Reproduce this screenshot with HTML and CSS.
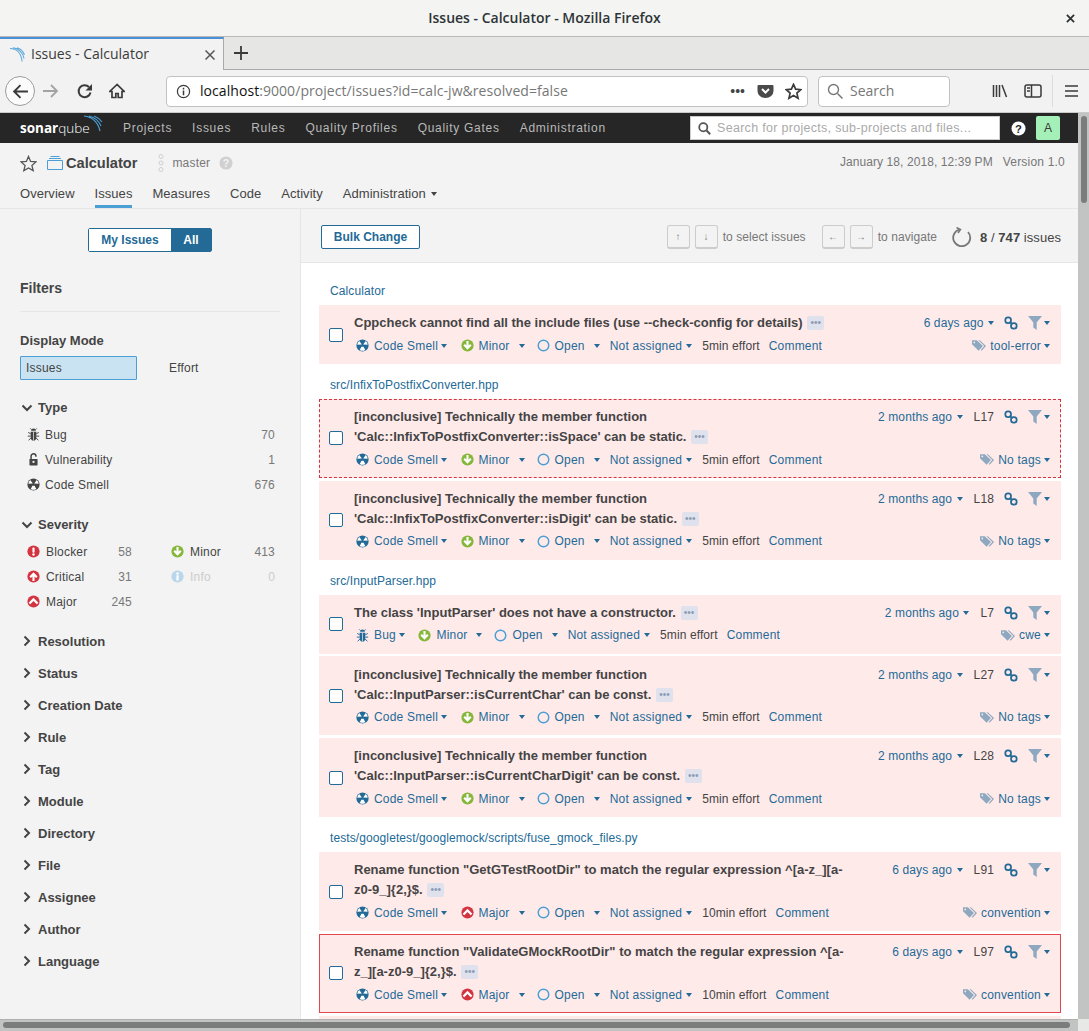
FILE: index.html
```html
<!DOCTYPE html>
<html lang="en">
<head>
    <meta charset="UTF-8">
    <title>Issues - Calculator - Mozilla Firefox</title>
    <link rel="stylesheet" href="styles.css">
</head>
<body>
<svg class="sprite" width="0" height="0">
    <defs>
        <symbol id="i-smell" viewBox="0 0 16 16"><circle cx="8" cy="8" r="7.5" fill="currentColor"/><path d="M7.2 6.700 4 2.400A6.500 6.500 0 0 0 1.600 7.100zM8.800 6.700 12 2.400a6.500 6.500 0 0 1 2.400 4.700zM6.700 9.500h2.600l2.100 4a6.500 6.500 0 0 1-6.800 0z" fill="#fff"/></symbol>
        <symbol id="i-bug" viewBox="0 0 16 16"><path d="M5 3.500a3 3 0 0 1 6 0zM4.500 4.500h7v6.500a3.500 4.500 0 0 1-7 0z" fill="currentColor"/><path d="M4.500 7 1.500 5.500M11.500 7l3-1.500M4.500 10H1M11.500 10H15M4.800 12.500 2 15M11.200 12.500 14 15M5.500 2 4 .5M10.500 2 12 .5" stroke="currentColor" fill="none" stroke-width="1.200"/><path d="M8 5v10" stroke="#fff" stroke-width=".8"/></symbol>
        <symbol id="i-lock" viewBox="0 0 16 16"><path d="M3 7.500h10v7a1 1 0 0 1-1 1H4a1 1 0 0 1-1-1z" fill="currentColor"/><path d="M5 7.500V4a3 3 0 0 1 6 0v.5" fill="none" stroke="currentColor" stroke-width="1.800"/><circle cx="8" cy="11" r="1.400" fill="#f3f3f3"/></symbol>
        <symbol id="i-blocker" viewBox="0 0 16 16"><circle cx="8" cy="8" r="7.500" fill="#d4333f"/><rect x="6.700" y="3" width="2.600" height="6.500" rx="1" fill="#fff"/><circle cx="8" cy="11.800" r="1.500" fill="#fff"/></symbol>
        <symbol id="i-critical" viewBox="0 0 16 16"><circle cx="8" cy="8" r="7.500" fill="#d4333f"/><path d="M8 2.800 13 8l-1.800 1.800L9.300 8v5.500H6.700V8L4.800 9.800 3 8z" fill="#fff"/></symbol>
        <symbol id="i-major" viewBox="0 0 16 16"><circle cx="8" cy="8" r="7.500" fill="#d4333f"/><path d="M8 3.500 14 9.500l-2 2-4-4-4 4-2-2z" fill="#fff"/></symbol>
        <symbol id="i-minor" viewBox="0 0 16 16"><circle cx="8" cy="8" r="7.500" fill="#85b73a"/><path d="M8 13.200 3 8l1.800-1.800L6.700 8V2.500h2.600V8l1.900-1.800L13 8z" fill="#fff"/></symbol>
        <symbol id="i-info" viewBox="0 0 16 16"><circle cx="8" cy="8" r="7.500" fill="#b9d6ea"/><rect x="6.700" y="6.500" width="2.600" height="6.500" fill="#fff"/><circle cx="8" cy="4.200" r="1.500" fill="#fff"/></symbol>
        <symbol id="i-open" viewBox="0 0 16 16"><circle cx="8" cy="8" r="6.500" fill="none" stroke="#4b9fd5" stroke-width="1.800"/></symbol>
        <symbol id="i-link" viewBox="0 0 16 16"><g fill="none" stroke="currentColor" stroke-width="2"><rect x="1.500" y="1.500" width="6.500" height="6.500" rx="3"/><rect x="8" y="8" width="6.500" height="6.500" rx="3"/><path d="m6.500 6.500 3 3"/></g></symbol>
        <symbol id="i-filter" viewBox="0 0 14 16"><path d="M0 1h14L8.700 7.500V15l-3.400-2.500v-5z" fill="#8ea9bf"/></symbol>
        <symbol id="i-tag" viewBox="0 0 16 14"><path d="M0 1h5.500l7 6.500-5 5.500L0 5.500z" fill="#8ea9bf"/><path d="M7.500 1H9l7 6.500-5 5.500-1-1 4-4.500z" fill="#8ea9bf"/><circle cx="2.600" cy="3.500" r="1" fill="#ffeaea"/></symbol>
        <symbol id="i-down" viewBox="0 0 12 12"><path d="m1.500 3.500 4.500 4.500 4.500-4.500" fill="none" stroke="currentColor" stroke-width="2"/></symbol>
        <symbol id="i-right" viewBox="0 0 12 12"><path d="m3.500 1.500 4.500 4.500-4.500 4.500" fill="none" stroke="currentColor" stroke-width="2"/></symbol>
        <symbol id="i-help" viewBox="0 0 16 16"><circle cx="8" cy="8" r="7.500" fill="currentColor"/><text x="8" y="12.300" text-anchor="middle" class="help-mark">?</text></symbol>
    </defs>
</svg>

<div class="window">
    <div class="titlebar">
        <span class="titlebar-text">Issues - Calculator - Mozilla Firefox</span>
        <svg class="titlebar-close" viewBox="0 0 10 10"><path d="m1 1 8 8M9 1l-8 8" stroke="#2e3436" stroke-width="2"/></svg>
    </div>
    <div class="tabstrip">
        <div class="tab">
            <svg class="tab-logo" viewBox="0 0 16 16"><path d="M1 1.500c7 0 11.500 5 12 13M4 .8c5.500.5 10 5 11 10.500M8 .8c3.500 1 6 3.500 7.500 7" fill="none" stroke="#5ba8d8" stroke-width="1.100"/></svg>
            <span class="tab-title">Issues - Calculator</span>
            <svg class="tab-close" viewBox="0 0 10 10"><path d="m.5.500 9 9M9.500.5l-9 9" stroke="#555" stroke-width="1.500"/></svg>
        </div>
        <svg class="tab-new" viewBox="0 0 14 14"><path d="M7 0v14M0 7h14" stroke="#3a3a3a" stroke-width="1.800"/></svg>
    </div>
    <div class="toolbar">
        <div class="back-btn"><svg viewBox="0 0 16 16"><path d="M15 8H2M8 2 2 8l6 6" fill="none" stroke="#3b3b3b" stroke-width="1.800"/></svg></div>
        <svg class="tool-icon forward" viewBox="0 0 16 16"><path d="M0 8h14M8 2l6 6-6 6" fill="none" stroke="#a3a3a3" stroke-width="1.800"/></svg>
        <svg class="tool-icon reload" viewBox="0 0 16 16"><path d="M13.500 9.500A6 6 0 1 1 12 4" fill="none" stroke="#3b3b3b" stroke-width="2"/><path d="M15 1v6.500H8.500z" fill="#3b3b3b"/></svg>
        <svg class="tool-icon home" viewBox="0 0 16 16"><path d="M8 1.500.8 8.500H3v6h3.800v-4h2.400v4H13v-6h2.200z" fill="none" stroke="#3b3b3b" stroke-width="1.700"/></svg>
        <div class="urlbar">
            <svg class="url-info" viewBox="0 0 16 16"><circle cx="8" cy="8" r="6.500" fill="none" stroke="#3b3b3b" stroke-width="1.300"/><path d="M8 7v5M8 4v1.800" stroke="#3b3b3b" stroke-width="1.600"/></svg>
            <span class="url-text"><b>localhost</b>:9000/project/issues?id=calc-jw&amp;resolved=false</span>
            <span class="url-dots">•••</span>
            <svg class="url-pocket" viewBox="0 0 16 16"><path d="M1 2h14a1 1 0 0 1 1 1v5a8 7 0 0 1-16 0V3a1 1 0 0 1 1-1z" fill="#4a4a4a"/><path d="m4.500 6 3.500 3.500L11.500 6" fill="none" stroke="#fff" stroke-width="2"/></svg>
            <svg class="url-star" viewBox="0 0 16 16"><path d="m8 1.300 2 4.500 4.900.5-3.700 3.200 1.100 4.800L8 11.800l-4.300 2.500 1.100-4.800L1.100 6.300 6 5.800z" fill="none" stroke="#3b3b3b" stroke-width="1.600"/></svg>
        </div>
        <div class="searchbar">
            <svg viewBox="0 0 16 16"><circle cx="6.500" cy="6.500" r="5" fill="none" stroke="#777" stroke-width="1.400"/><path d="m10.500 10.500 5 5" stroke="#777" stroke-width="1.500"/></svg>
            <span>Search</span>
        </div>
        <svg class="tool-icon library" viewBox="0 0 16 16"><path d="M1.500 2v12M4.500 2v12M7.500 2v12M10 2l4.500 12" stroke="#3b3b3b" stroke-width="1.500"/></svg>
        <svg class="tool-icon sidebar-btn" viewBox="0 0 18 16"><rect x="1" y="2" width="16" height="12" rx="2" fill="none" stroke="#3b3b3b" stroke-width="1.500"/><path d="M7.500 2v12M3 5h3M3 8h3" stroke="#3b3b3b" stroke-width="1.500"/></svg>
        <span class="tool-sep"></span>
        <svg class="tool-icon burger" viewBox="0 0 14 14"><path d="M0 2h13M0 7h13M0 12h13" stroke="#3b3b3b" stroke-width="1.500"/></svg>
    </div>

    <div class="viewport">
        <div class="page">
            <nav class="global-nav">
                <a class="logo"><b>sonar</b>qube<svg viewBox="0 0 20 18"><path d="M1 1c8 1 14 6 16 15M6 1c6 1.500 10 5 12 10M11 1c3 1 6 3.500 8 6" fill="none" stroke="#4b9fd5" stroke-width="1.200"/></svg></a>
                <a class="global-link">Projects</a>
                <a class="global-link">Issues</a>
                <a class="global-link">Rules</a>
                <a class="global-link">Quality Profiles</a>
                <a class="global-link">Quality Gates</a>
                <a class="global-link">Administration</a>
                <div class="global-search">
                    <svg viewBox="0 0 16 16"><circle cx="6.500" cy="6.500" r="5" fill="none" stroke="#555" stroke-width="2.200"/><path d="m10.500 10.500 4.500 4.500" stroke="#555" stroke-width="2.400"/></svg>
                    <span>Search for projects, sub-projects and files...</span>
                </div>
                <svg class="global-help"><use href="#i-help"/></svg>
                <span class="avatar">A</span>
            </nav>

            <header class="project-head">
                <div class="project-top">
                    <svg class="project-star" viewBox="0 0 16 16"><path d="m8 1.300 2 4.700 5 .5-3.800 3.300 1.200 4.900L8 12.200l-4.400 2.500 1.200-4.900L1 6.500 6 6z" fill="none" stroke="#555" stroke-width="1.200"/></svg>
                    <svg class="project-icon" viewBox="0 0 16 14"><path d="M.5 4.500h15v9H.5zM2 2.500h12M3.500.5h9" fill="none" stroke="#4b9fd5" stroke-width="1"/></svg>
                    <span class="project-name">Calculator</span>
                    <svg class="branch-icon" viewBox="0 0 6 18"><g fill="none" stroke="#cfcfcf" stroke-width="1"><circle cx="3" cy="2.500" r="2"/><circle cx="3" cy="15.500" r="2"/><circle cx="3" cy="9" r="2"/></g></svg>
                    <span class="branch-name">master</span>
                    <svg class="branch-help"><use href="#i-help"/></svg>
                    <span class="project-date">January 18, 2018, 12:39 PM</span>
                    <span class="project-version">Version 1.0</span>
                </div>
                <div class="project-nav">
                    <a>Overview</a>
                    <a class="active">Issues</a>
                    <a>Measures</a>
                    <a>Code</a>
                    <a>Activity</a>
                    <a>Administration <i class="caret dark"></i></a>
                </div>
            </header>

            <div class="layout">
                <aside class="sidebar">
                    <div class="toggle">
                        <span class="toggle-off">My Issues</span>
                        <span class="toggle-on">All</span>
                    </div>
                    <h2 class="filters-title">Filters</h2>
                    <h3 class="facet-title plain">Display Mode</h3>
                    <div class="mode-row">
                        <span class="mode-on">Issues</span>
                        <span class="mode-off">Effort</span>
                    </div>

                    <h3 class="facet-title"><svg class="chev"><use href="#i-down"/></svg>Type</h3>
                    <div class="facet-list">
                        <div class="facet-row"><svg class="facet-icon"><use href="#i-bug"/></svg><span>Bug</span><em>70</em></div>
                        <div class="facet-row"><svg class="facet-icon"><use href="#i-lock"/></svg><span>Vulnerability</span><em>1</em></div>
                        <div class="facet-row"><svg class="facet-icon"><use href="#i-smell"/></svg><span>Code Smell</span><em>676</em></div>
                    </div>

                    <h3 class="facet-title"><svg class="chev"><use href="#i-down"/></svg>Severity</h3>
                    <div class="facet-grid">
                        <div class="facet-row"><svg class="facet-icon"><use href="#i-blocker"/></svg><span>Blocker</span><em>58</em></div>
                        <div class="facet-row"><svg class="facet-icon"><use href="#i-minor"/></svg><span>Minor</span><em>413</em></div>
                        <div class="facet-row"><svg class="facet-icon"><use href="#i-critical"/></svg><span>Critical</span><em>31</em></div>
                        <div class="facet-row muted"><svg class="facet-icon"><use href="#i-info"/></svg><span>Info</span><em>0</em></div>
                        <div class="facet-row"><svg class="facet-icon"><use href="#i-major"/></svg><span>Major</span><em>245</em></div>
                    </div>

                    <div class="facet-closed">
                        <h3><svg class="chev"><use href="#i-right"/></svg>Resolution</h3>
                        <h3><svg class="chev"><use href="#i-right"/></svg>Status</h3>
                        <h3><svg class="chev"><use href="#i-right"/></svg>Creation Date</h3>
                        <h3><svg class="chev"><use href="#i-right"/></svg>Rule</h3>
                        <h3><svg class="chev"><use href="#i-right"/></svg>Tag</h3>
                        <h3><svg class="chev"><use href="#i-right"/></svg>Module</h3>
                        <h3><svg class="chev"><use href="#i-right"/></svg>Directory</h3>
                        <h3><svg class="chev"><use href="#i-right"/></svg>File</h3>
                        <h3><svg class="chev"><use href="#i-right"/></svg>Assignee</h3>
                        <h3><svg class="chev"><use href="#i-right"/></svg>Author</h3>
                        <h3><svg class="chev"><use href="#i-right"/></svg>Language</h3>
                    </div>
                </aside>

                <main class="content">
                    <div class="content-bar">
                        <button class="bulk-btn">Bulk Change</button>
                        <div class="shortcuts">
                            <kbd>↑</kbd><kbd>↓</kbd><span class="hint">to select issues</span>
                            <kbd class="kbd-gap">←</kbd><kbd>→</kbd><span class="hint">to navigate</span>
                            <svg class="refresh" viewBox="0 0 20 20"><path d="M7.500 2.500A8.500 8.500 0 1 0 16 5" fill="none" stroke="#777" stroke-width="1.800"/><path d="M4.500 .5 8.500 2.500 6 6" fill="none" stroke="#777" stroke-width="1.500"/></svg>
                            <span class="total"><b>8</b> / <b>747</b> issues</span>
                        </div>
                    </div>

                    <div class="issues">
                        <div class="component">Calculator</div>
                        <div class="issue">
                            <i class="check"></i>
                            <div class="issue-body">
                                <div class="issue-top">
                                    <p class="issue-msg">Cppcheck cannot find all the include files (use --check-config for details) <span class="more">•••</span></p>
                                    <div class="issue-side"><a>6 days ago <i class="caret"></i></a><svg class="i-link"><use href="#i-link"/></svg><span class="filter"><svg><use href="#i-filter"/></svg><i class="caret"></i></span></div>
                                </div>
                                <div class="issue-meta">
                                    <a class="m-type"><svg class="smell"><use href="#i-smell"/></svg>Code Smell <i class="caret"></i></a>
                                    <a class="m-sev"><svg><use href="#i-minor"/></svg>Minor <i class="caret"></i></a>
                                    <a class="m-status"><svg><use href="#i-open"/></svg>Open <i class="caret"></i></a>
                                    <a class="m-assign">Not assigned <i class="caret"></i></a>
                                    <span class="m-effort">5min effort</span>
                                    <a>Comment</a>
                                    <a class="m-tags"><svg><use href="#i-tag"/></svg>tool-error <i class="caret"></i></a>
                                </div>
                            </div>
                        </div>

                        <div class="component">src/InfixToPostfixConverter.hpp</div>
                        <div class="issue two-line dashed">
                            <i class="check"></i>
                            <div class="issue-body">
                                <div class="issue-top">
                                    <p class="issue-msg">[inconclusive] Technically the member function 'Calc::InfixToPostfixConverter::isSpace' can be static. <span class="more">•••</span></p>
                                    <div class="issue-side"><a>2 months ago <i class="caret"></i></a><span class="line">L17</span><svg class="i-link"><use href="#i-link"/></svg><span class="filter"><svg><use href="#i-filter"/></svg><i class="caret"></i></span></div>
                                </div>
                                <div class="issue-meta">
                                    <a class="m-type"><svg class="smell"><use href="#i-smell"/></svg>Code Smell <i class="caret"></i></a>
                                    <a class="m-sev"><svg><use href="#i-minor"/></svg>Minor <i class="caret"></i></a>
                                    <a class="m-status"><svg><use href="#i-open"/></svg>Open <i class="caret"></i></a>
                                    <a class="m-assign">Not assigned <i class="caret"></i></a>
                                    <span class="m-effort">5min effort</span>
                                    <a>Comment</a>
                                    <a class="m-tags"><svg><use href="#i-tag"/></svg>No tags <i class="caret"></i></a>
                                </div>
                            </div>
                        </div>
                        <div class="issue two-line">
                            <i class="check"></i>
                            <div class="issue-body">
                                <div class="issue-top">
                                    <p class="issue-msg">[inconclusive] Technically the member function 'Calc::InfixToPostfixConverter::isDigit' can be static. <span class="more">•••</span></p>
                                    <div class="issue-side"><a>2 months ago <i class="caret"></i></a><span class="line">L18</span><svg class="i-link"><use href="#i-link"/></svg><span class="filter"><svg><use href="#i-filter"/></svg><i class="caret"></i></span></div>
                                </div>
                                <div class="issue-meta">
                                    <a class="m-type"><svg class="smell"><use href="#i-smell"/></svg>Code Smell <i class="caret"></i></a>
                                    <a class="m-sev"><svg><use href="#i-minor"/></svg>Minor <i class="caret"></i></a>
                                    <a class="m-status"><svg><use href="#i-open"/></svg>Open <i class="caret"></i></a>
                                    <a class="m-assign">Not assigned <i class="caret"></i></a>
                                    <span class="m-effort">5min effort</span>
                                    <a>Comment</a>
                                    <a class="m-tags"><svg><use href="#i-tag"/></svg>No tags <i class="caret"></i></a>
                                </div>
                            </div>
                        </div>

                        <div class="component">src/InputParser.hpp</div>
                        <div class="issue">
                            <i class="check"></i>
                            <div class="issue-body">
                                <div class="issue-top">
                                    <p class="issue-msg">The class 'InputParser' does not have a constructor. <span class="more">•••</span></p>
                                    <div class="issue-side"><a>2 months ago <i class="caret"></i></a><span class="line">L7</span><svg class="i-link"><use href="#i-link"/></svg><span class="filter"><svg><use href="#i-filter"/></svg><i class="caret"></i></span></div>
                                </div>
                                <div class="issue-meta">
                                    <a class="m-type"><svg class="bug"><use href="#i-bug"/></svg>Bug <i class="caret"></i></a>
                                    <a class="m-sev"><svg><use href="#i-minor"/></svg>Minor <i class="caret"></i></a>
                                    <a class="m-status"><svg><use href="#i-open"/></svg>Open <i class="caret"></i></a>
                                    <a class="m-assign">Not assigned <i class="caret"></i></a>
                                    <span class="m-effort">5min effort</span>
                                    <a>Comment</a>
                                    <a class="m-tags"><svg><use href="#i-tag"/></svg>cwe <i class="caret"></i></a>
                                </div>
                            </div>
                        </div>
                        <div class="issue two-line">
                            <i class="check"></i>
                            <div class="issue-body">
                                <div class="issue-top">
                                    <p class="issue-msg">[inconclusive] Technically the member function 'Calc::InputParser::isCurrentChar' can be const. <span class="more">•••</span></p>
                                    <div class="issue-side"><a>2 months ago <i class="caret"></i></a><span class="line">L27</span><svg class="i-link"><use href="#i-link"/></svg><span class="filter"><svg><use href="#i-filter"/></svg><i class="caret"></i></span></div>
                                </div>
                                <div class="issue-meta">
                                    <a class="m-type"><svg class="smell"><use href="#i-smell"/></svg>Code Smell <i class="caret"></i></a>
                                    <a class="m-sev"><svg><use href="#i-minor"/></svg>Minor <i class="caret"></i></a>
                                    <a class="m-status"><svg><use href="#i-open"/></svg>Open <i class="caret"></i></a>
                                    <a class="m-assign">Not assigned <i class="caret"></i></a>
                                    <span class="m-effort">5min effort</span>
                                    <a>Comment</a>
                                    <a class="m-tags"><svg><use href="#i-tag"/></svg>No tags <i class="caret"></i></a>
                                </div>
                            </div>
                        </div>
                        <div class="issue two-line">
                            <i class="check"></i>
                            <div class="issue-body">
                                <div class="issue-top">
                                    <p class="issue-msg">[inconclusive] Technically the member function 'Calc::InputParser::isCurrentCharDigit' can be const. <span class="more">•••</span></p>
                                    <div class="issue-side"><a>2 months ago <i class="caret"></i></a><span class="line">L28</span><svg class="i-link"><use href="#i-link"/></svg><span class="filter"><svg><use href="#i-filter"/></svg><i class="caret"></i></span></div>
                                </div>
                                <div class="issue-meta">
                                    <a class="m-type"><svg class="smell"><use href="#i-smell"/></svg>Code Smell <i class="caret"></i></a>
                                    <a class="m-sev"><svg><use href="#i-minor"/></svg>Minor <i class="caret"></i></a>
                                    <a class="m-status"><svg><use href="#i-open"/></svg>Open <i class="caret"></i></a>
                                    <a class="m-assign">Not assigned <i class="caret"></i></a>
                                    <span class="m-effort">5min effort</span>
                                    <a>Comment</a>
                                    <a class="m-tags"><svg><use href="#i-tag"/></svg>No tags <i class="caret"></i></a>
                                </div>
                            </div>
                        </div>

                        <div class="component">tests/googletest/googlemock/scripts/fuse_gmock_files.py</div>
                        <div class="issue two-line">
                            <i class="check"></i>
                            <div class="issue-body">
                                <div class="issue-top">
                                    <p class="issue-msg">Rename function "GetGTestRootDir" to match the regular expression ^[a-z_][a-z0-9_]{2,}$. <span class="more">•••</span></p>
                                    <div class="issue-side"><a>6 days ago <i class="caret"></i></a><span class="line">L91</span><svg class="i-link"><use href="#i-link"/></svg><span class="filter"><svg><use href="#i-filter"/></svg><i class="caret"></i></span></div>
                                </div>
                                <div class="issue-meta">
                                    <a class="m-type"><svg class="smell"><use href="#i-smell"/></svg>Code Smell <i class="caret"></i></a>
                                    <a class="m-sev"><svg><use href="#i-major"/></svg>Major <i class="caret"></i></a>
                                    <a class="m-status"><svg><use href="#i-open"/></svg>Open <i class="caret"></i></a>
                                    <a class="m-assign">Not assigned <i class="caret"></i></a>
                                    <span class="m-effort">10min effort</span>
                                    <a>Comment</a>
                                    <a class="m-tags"><svg><use href="#i-tag"/></svg>convention <i class="caret"></i></a>
                                </div>
                            </div>
                        </div>
                        <div class="issue two-line selected">
                            <i class="check"></i>
                            <div class="issue-body">
                                <div class="issue-top">
                                    <p class="issue-msg">Rename function "ValidateGMockRootDir" to match the regular expression ^[a-z_][a-z0-9_]{2,}$. <span class="more">•••</span></p>
                                    <div class="issue-side"><a>6 days ago <i class="caret"></i></a><span class="line">L97</span><svg class="i-link"><use href="#i-link"/></svg><span class="filter"><svg><use href="#i-filter"/></svg><i class="caret"></i></span></div>
                                </div>
                                <div class="issue-meta">
                                    <a class="m-type"><svg class="smell"><use href="#i-smell"/></svg>Code Smell <i class="caret"></i></a>
                                    <a class="m-sev"><svg><use href="#i-major"/></svg>Major <i class="caret"></i></a>
                                    <a class="m-status"><svg><use href="#i-open"/></svg>Open <i class="caret"></i></a>
                                    <a class="m-assign">Not assigned <i class="caret"></i></a>
                                    <span class="m-effort">10min effort</span>
                                    <a>Comment</a>
                                    <a class="m-tags"><svg><use href="#i-tag"/></svg>convention <i class="caret"></i></a>
                                </div>
                            </div>
                        </div>
                        <div class="issue two-line"></div>
                    </div>
                </main>
            </div>
        </div>
        <div class="vscroll"><span class="vthumb"></span></div>
    </div>
    <div class="hscroll">
        <div class="htrack"><span class="hthumb"></span></div>
        <span class="corner"></span>
    </div>
</div>
</body>
</html>
```

FILE: styles.css
```css
html, body {
    height: 100%;
    margin: 0;
    overflow: hidden;
}
body {
    font-family: "Liberation Sans", Arial, sans-serif;
    font-size: 12px;
    letter-spacing: 0.2px;
    color: #444;
    background-color: #f3f3f3;
}
.sprite {
    display: block;
    height: 0;
}
.help-mark {
    font: bold 12px "Liberation Sans", sans-serif;
}
.window {
    display: flex;
    flex-direction: column;
    height: 1031px;
    overflow: hidden;
}

/* browser chrome */
.titlebar {
    height: 36px;
    flex: none;
    display: flex;
    align-items: center;
    justify-content: center;
    position: relative;
    background-color: #f4f4f3;
    border-bottom: 1px solid #b9b9b6;
}
.titlebar-text {
    font-family: "Open Sans", sans-serif;
    font-size: 14px;
    font-weight: 600;
    letter-spacing: 0;
    color: #2e3436;
    padding-bottom: 2px;
}
.titlebar-close {
    position: absolute;
    right: 14px;
    top: 14px;
    width: 9px;
    height: 9px;
}
.tabstrip {
    height: 32px;
    flex: none;
    display: flex;
    align-items: center;
    background-color: #e6e6e4;
    border-bottom: 1px solid #a9a9a7;
}
.tab {
    width: 224px;
    height: 33px;
    box-sizing: border-box;
    margin-bottom: -1px;
    display: flex;
    align-items: center;
    padding-left: 9px;
    background-color: #f2f2f2;
    border-top: 2px solid #4a90d9;
    border-right: 1px solid #a9a9a7;
}
.tab-logo {
    width: 16px;
    height: 16px;
}
.tab-title {
    font-family: "Open Sans", sans-serif;
    font-size: 14px;
    letter-spacing: 0;
    color: #3b3b3b;
    margin-left: 6px;
    padding-bottom: 2px;
    flex: 1;
}
.tab-close {
    width: 10px;
    height: 10px;
    margin-right: 8px;
}
.tab-new {
    width: 14px;
    height: 14px;
    margin-left: 10px;
}
.toolbar {
    height: 43px;
    flex: none;
    box-sizing: border-box;
    display: flex;
    align-items: center;
    background-color: #f2f2f2;
    border-bottom: 1px solid #c9c9c7;
}
.back-btn {
    width: 30px;
    height: 30px;
    box-sizing: border-box;
    margin-left: 5px;
    display: flex;
    align-items: center;
    justify-content: center;
    background-color: #fbfbfb;
    border: 1px solid #9b9b9b;
    border-radius: 50%;
}
.back-btn svg {
    width: 17px;
    height: 17px;
}
.tool-icon {
    width: 16px;
    height: 16px;
    flex: none;
}
.forward { margin-left: 8px; }
.reload { margin-left: 18px; }
.home { margin-left: 16px; }
.urlbar {
    width: 642px;
    height: 31px;
    box-sizing: border-box;
    margin-left: 41px;
    display: flex;
    align-items: center;
    padding: 0 5px 0 9px;
    background-color: #fff;
    border: 1px solid #c2c2c2;
    border-radius: 4px;
}
.url-info {
    width: 15px;
    height: 15px;
}
.url-text {
    flex: 1;
    margin-left: 9px;
    padding-bottom: 2px;
    font-family: "Open Sans", sans-serif;
    font-size: 14px;
    letter-spacing: 0.06px;
    color: #777;
}
.url-text b {
    font-weight: 400;
    color: #111;
}
.url-dots {
    font-size: 14px;
    letter-spacing: 0;
    color: #444;
}
.url-pocket {
    width: 17px;
    height: 16px;
    margin-left: 12px;
}
.url-star {
    width: 17px;
    height: 17px;
    margin-left: 11px;
}
.searchbar {
    width: 132px;
    height: 31px;
    box-sizing: border-box;
    margin-left: 10px;
    display: flex;
    align-items: center;
    padding-left: 8px;
    background-color: #fff;
    border: 1px solid #c2c2c2;
    border-radius: 4px;
    font-family: "Open Sans", sans-serif;
    font-size: 14px;
    letter-spacing: 0;
    color: #777;
}
.searchbar span {
    padding-bottom: 2px;
}
.searchbar svg {
    width: 16px;
    height: 16px;
    margin-right: 7px;
}
.library { margin-left: 42px; }
.sidebar-btn { margin-left: 16px; width: 18px; }
.tool-sep {
    width: 1px;
    height: 32px;
    margin-left: 10px;
    background-color: #dcdcdc;
}
.burger { margin-left: 12px; width: 14px; height: 14px; }

/* page frame */
.viewport {
    flex: 1;
    min-height: 0;
    display: flex;
}
.page {
    flex: 1;
    min-width: 0;
    overflow: hidden;
    display: flex;
    flex-direction: column;
}
.vscroll {
    width: 11px;
    flex: none;
    background-color: #c1c4c2;
    padding: 3px 2px 0 3px;
    box-sizing: border-box;
}
.vthumb {
    display: block;
    height: 87px;
    background-color: #7a7d7c;
    border-radius: 3px;
}
.hscroll {
    height: 12px;
    flex: none;
    display: flex;
}
.htrack {
    flex: 1;
    background-color: #c1c4c2;
    padding: 2px 8px 3px 3px;
    border-top: 1px solid #b0b0ae;
    box-sizing: border-box;
}
.hthumb {
    display: block;
    height: 100%;
    background-color: #7a7d7c;
    border-radius: 3px;
}
.corner {
    width: 11px;
    background-color: #e8e8e7;
}

/* top navigation */
.global-nav {
    height: 30px;
    flex: none;
    display: flex;
    align-items: center;
    padding-left: 20px;
    background-color: #262626;
}
.logo {
    width: 83px;
    display: flex;
    align-items: center;
    position: relative;
    margin-right: 20px;
    font-family: "Open Sans", sans-serif;
    font-size: 13.5px;
    font-weight: 300;
    letter-spacing: 0;
    color: #fff;
}
.logo b {
    font-weight: 700;
}
.logo svg {
    position: absolute;
    right: 0;
    top: -4px;
    width: 20px;
    height: 18px;
}
.global-link {
    margin-right: 20px;
    color: #b9b9b9;
    letter-spacing: 0.72px;
}
.global-search {
    width: 310px;
    height: 24px;
    box-sizing: border-box;
    margin-left: auto;
    display: flex;
    align-items: center;
    padding-left: 7px;
    background-color: #fff;
    border: 1px solid #ccc;
    color: #aaa;
    font-size: 12.5px;
    letter-spacing: 0.3px;
}
.global-search svg {
    width: 13px;
    height: 13px;
    margin-right: 6px;
    flex: none;
}
.global-help {
    width: 15px;
    height: 15px;
    margin-left: 11px;
    color: #fff;
    fill: #262626;
}
.avatar {
    width: 24px;
    height: 24px;
    margin-left: 10px;
    margin-right: 18px;
    display: flex;
    align-items: center;
    justify-content: center;
    border-radius: 2px;
    background-color: #a5efb8;
    color: #3a3a3a;
}

/* project header */
.project-head {
    height: 66px;
    flex: none;
    box-sizing: border-box;
    padding: 0 13px 0 20px;
    background-color: #f3f3f3;
    border-bottom: 1px solid #e6e6e6;
}
.project-top {
    height: 40px;
    display: flex;
    align-items: center;
}
.project-star {
    width: 17px;
    height: 17px;
}
.project-icon {
    width: 16px;
    height: 14px;
    margin-left: 10px;
}
.project-name {
    margin-left: 3px;
    margin-bottom: 1px;
    font-size: 14.6px;
    font-weight: bold;
    letter-spacing: 0;
    color: #444;
}
.branch-icon {
    width: 6px;
    height: 18px;
    margin-left: 21px;
}
.branch-name {
    margin-left: 8px;
    color: #777;
}
.branch-help {
    width: 14px;
    height: 14px;
    margin-left: 9px;
    color: #d0d0d0;
    fill: #f3f3f3;
}
.project-date {
    margin-left: auto;
    margin-bottom: 2px;
    letter-spacing: 0.08px;
    color: #777;
}
.project-version {
    margin-left: 10px;
    margin-bottom: 2px;
    color: #777;
}
.project-nav {
    height: 25px;
    display: flex;
    gap: 20px;
    font-size: 13px;
    letter-spacing: 0.05px;
}
.project-nav a {
    box-sizing: border-box;
    height: 25px;
    padding-top: 3px;
    color: #444;
}
.project-nav a.active {
    border-bottom: 3px solid #4b9fd5;
}

/* shared caret */
.caret {
    display: inline-block;
    flex: none;
    width: 0;
    height: 0;
    margin-left: 1px;
    vertical-align: 2px;
    border-top: 4px solid #236a97;
    border-left: 3.5px solid transparent;
    border-right: 3.5px solid transparent;
}
.caret.dark {
    border-top-color: #444;
}

/* sidebar */
.layout {
    flex: 1;
    min-height: 0;
    display: flex;
}
.sidebar {
    width: 301px;
    flex: none;
    box-sizing: border-box;
    padding: 19px 20px 0;
    border-right: 1px solid #e6e6e6;
    background-color: #f3f3f3;
}
.toggle {
    width: 124px;
    height: 24px;
    box-sizing: border-box;
    margin-left: 68px;
    display: flex;
    border: 1px solid #236a97;
    border-radius: 2px;
    font-weight: bold;
    letter-spacing: 0;
    line-height: 22px;
    text-align: center;
}
.toggle-off {
    flex: 1;
    background-color: #fff;
    color: #236a97;
}
.toggle-on {
    width: 40px;
    background-color: #236a97;
    color: #fff;
}
.filters-title {
    margin: 26px 0 0;
    padding-bottom: 13px;
    border-bottom: 1px solid #e6e6e6;
    font-size: 14px;
    letter-spacing: 0;
    line-height: 20px;
    color: #444;
}
.facet-title {
    margin: 0;
    display: flex;
    align-items: center;
    font-size: 13px;
    letter-spacing: 0;
    line-height: 20px;
    color: #444;
}
.facet-title.plain {
    margin-top: 19px;
}
.chev {
    width: 12px;
    height: 12px;
    flex: none;
    margin: 0 5px 0 1px;
    color: #444;
}
.mode-row {
    display: flex;
    margin-top: 5px;
    margin-bottom: 18px;
    line-height: 22px;
}
.mode-on {
    width: 117px;
    box-sizing: border-box;
    height: 24px;
    padding-left: 5px;
    background-color: #cae3f2;
    border: 1px solid #4b9fd5;
    border-radius: 1px;
}
.mode-off {
    margin-left: 32px;
    line-height: 24px;
}
.facet-list {
    margin-top: 4px;
    margin-bottom: 18px;
}
.facet-grid {
    margin-top: 4px;
    margin-bottom: 11px;
    display: grid;
    grid-template-columns: 112px 1fr;
    column-gap: 32px;
}
.facet-row {
    height: 25px;
    display: flex;
    align-items: center;
    padding-left: 7px;
    padding-right: 5px;
}
.facet-grid .facet-row:nth-child(odd) {
    padding-right: 0;
}
.facet-row em {
    margin-left: auto;
    font-style: normal;
    color: #777;
}
.facet-row.muted span,
.facet-row.muted em {
    color: #ccc;
}
.facet-icon {
    width: 13px;
    height: 13px;
    margin-right: 5px;
    color: #444;
    flex: none;
}
.facet-grid .facet-icon {
    margin-right: 6px;
}
.facet-closed h3 {
    margin: 0;
    height: 32px;
    display: flex;
    align-items: center;
    font-size: 13px;
    letter-spacing: 0;
    color: #444;
}

/* issue list */
.content {
    flex: 1;
    min-width: 0;
    background-color: #fff;
}
.content-bar {
    height: 54px;
    box-sizing: border-box;
    display: flex;
    align-items: center;
    justify-content: space-between;
    padding: 3px 17px 0 20px;
    background-color: #f3f3f3;
    border-bottom: 1px solid #e6e6e6;
}
.bulk-btn {
    width: 99px;
    height: 24px;
    padding: 0;
    background-color: #fff;
    border: 1px solid #236a97;
    border-radius: 2px;
    color: #236a97;
    font: bold 12px "Liberation Sans", Arial, sans-serif;
}
.shortcuts {
    display: flex;
    align-items: center;
}
kbd {
    width: 23px;
    height: 24px;
    box-sizing: border-box;
    display: flex;
    align-items: center;
    justify-content: center;
    margin-right: 5px;
    background-color: #f3f3f3;
    border: 1px solid #ccc;
    border-bottom-width: 2px;
    border-radius: 3px;
    font: 10px "Liberation Sans", sans-serif;
    color: #777;
}
.kbd-gap {
    margin-left: 16px;
}
.hint {
    letter-spacing: 0.06px;
    color: #777;
}
.refresh {
    width: 20px;
    height: 20px;
    margin-left: 15px;
    margin-right: 8px;
}
.total {
    font-size: 13px;
    letter-spacing: 0.05px;
    color: #444;
}
.issues {
    padding: 10px 17px 0 18px;
}
.component {
    height: 32px;
    box-sizing: border-box;
    padding-left: 11px;
    line-height: 37px;
    letter-spacing: 0.1px;
    color: #236a97;
}
.issue {
    min-height: 59px;
    box-sizing: border-box;
    display: flex;
    align-items: center;
    margin-bottom: 2.85px;
    padding: 0 10px 0 9px;
    background-color: #ffeaea;
    border: 1px solid transparent;
}
.two-line {
    min-height: 79px;
}
.dashed {
    border: 1px dashed #d4333f;
}
.selected {
    border: 1px solid #e2474f;
}
.check {
    width: 12px;
    height: 12px;
    flex: none;
    background-color: #fff;
    border: 1px solid #236a97;
    border-radius: 2px;
    margin-right: 11px;
}
.issue-body {
    flex: 1;
    min-width: 0;
}
.issue-top {
    display: flex;
    justify-content: space-between;
}
.issue-msg {
    margin: 0;
    width: 490px;
    font-size: 13px;
    font-weight: bold;
    letter-spacing: 0;
    line-height: 20px;
    color: #444;
}
.more {
    display: inline-block;
    width: 17px;
    height: 14px;
    vertical-align: 1px;
    margin-left: 1px;
    background-color: #dfe2ec;
    border-radius: 2px;
    color: #8a9bb5;
    font-size: 10px;
    font-weight: normal;
    line-height: 14px;
    text-align: center;
}
.issue-side {
    display: flex;
    align-items: center;
    height: 20px;
    letter-spacing: 0.12px;
    color: #236a97;
    flex: none;
}
.issue-side .line {
    margin-left: 11px;
    color: #444;
}
.i-link {
    width: 14px;
    height: 14px;
    margin-left: 10px;
    color: #236a97;
}
.filter {
    display: flex;
    align-items: center;
    margin-left: 10px;
}
.filter svg {
    width: 14px;
    height: 16px;
}
.filter .caret {
    margin-left: 2px;
}
.issue-meta {
    display: flex;
    align-items: center;
    margin-top: 2.5px;
    height: 20px;
    color: #236a97;
    padding-left: 2px;
}
.issue-meta a,
.issue-meta span {
    display: flex;
    align-items: center;
    margin-right: 10px;
}
.issue-meta svg {
    width: 13px;
    height: 13px;
    flex: none;
    margin-right: 5px;
}
.issue-meta .caret {
    margin-left: 3px;
}
.issue-meta .m-type {
    margin-right: 13.5px;
}
.issue-meta .m-sev {
    margin-right: 12px;
}
.issue-meta .m-sev .caret,
.issue-meta .m-status .caret {
    margin-left: 9px;
}
.issue-meta .m-assign .caret {
    margin-left: 4px;
}
.issue-meta .m-effort {
    margin-right: 9px;
    letter-spacing: 0.1px;
    color: #444;
}
.issue-meta .m-tags {
    margin-left: auto;
    margin-right: 0;
}
.issue-meta .m-tags svg {
    width: 14px;
    margin-right: 4px;
}
```
